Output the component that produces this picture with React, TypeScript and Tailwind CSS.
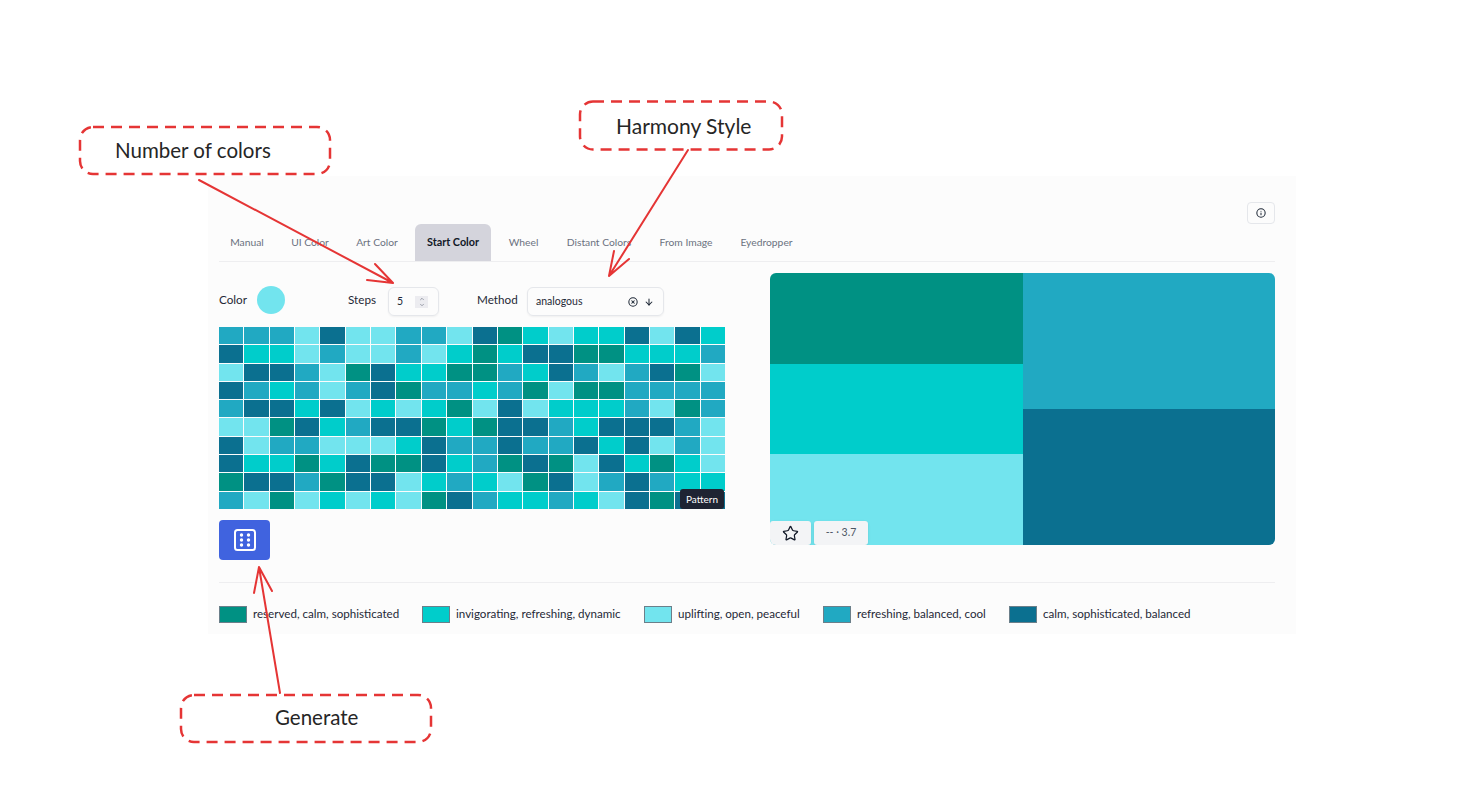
import { Star, ArrowDown, CircleX, Info, ChevronUp, ChevronDown } from "lucide-react";

const colors: Record<string, string> = { g: "bg-[#009183]", c: "bg-[#00cdcb]", l: "bg-[#72e4ee]", b: "bg-[#21a9c2]", d: "bg-[#0b7090]" };
const rows = [
  "bbbldllbbldgclccdldc",
  "dcclbllblcgcddggcccb",
  "lddblgdccggbcdblbdgl",
  "dbcblbdgbbcbglggbbbb",
  "bddcdlclcgldlcccblgb",
  "llgdcbddgcgddbcdddbl",
  "dlbblllcdbbdbbdcdlbl",
  "dccgcdggdcbgdgldcgcl",
  "gddbgddlcbclgdlbdbcc",
  "blglclclgdbccbcldgdd",
];
const tabs = [
  ["Manual", "w-[56px]"],
  ["UI Color", "w-[58px]"],
  ["Art Color", "w-[64px]"],
  ["Start Color", "w-[76px]"],
  ["Wheel", "w-[53px]"],
  ["Distant Colors", "w-[86px]"],
  ["From Image", "w-[76px]"],
  ["Eyedropper", "w-[73px]"],
];
const legend = [
  ["g", "reserved, calm, sophisticated", "w-[147px]", ""],
  ["c", "invigorating, refreshing, dynamic", "w-[165px]", "ml-[22px]"],
  ["l", "uplifting, open, peaceful", "w-[122px]", "ml-[23px]"],
  ["b", "refreshing, balanced, cool", "w-[130px]", "ml-[23px]"],
  ["d", "calm, sophisticated, balanced", "w-[149px]", "ml-[22px]"],
];

function Callout({ className, label }: { className: string; label: string }) {
  return (
    <div className={`absolute whitespace-nowrap text-[#262626] ${className}`}>
      {label}
    </div>
  );
}

export default function App() {
  return (
    <div className="relative h-[793px] w-[1476px] overflow-hidden bg-white font-['Lato','Noto_Sans',sans-serif] text-[#1f2937]">
      <div className="ml-[208px] pt-[176px]">
        <div className="h-[458px] w-[1088px] bg-[#fcfcfc] pl-[11px] pr-[21px] pt-[26px]">
          <div className="flex h-[22px] justify-end">
            <button className="flex w-[28px] items-center justify-center rounded-[4px] border border-[#e5e7eb]">
              <Info size={10} strokeWidth={2.5} className="text-[#1f2937]" />
            </button>
          </div>
          <div className="flex h-[38px] gap-[6px] border-b border-[#eeeef0]">
            {tabs.map(([t, w]) => (
              <div
                key={t}
                className={
                  t === "Start Color"
                    ? `flex items-center justify-center rounded-t-[6px] bg-[#d4d4dc] text-[10.8px] font-bold text-[#111827] ${w}`
                    : `flex items-center justify-center whitespace-nowrap text-[10.3px] text-[#6b7280] ${w}`
                }
              >
                {t}
              </div>
            ))}
          </div>
          <div className="mt-[11px] flex h-[309px] justify-between">
            <div className="w-[506px]">
              <div className="mt-[12px] flex h-[30px] items-center text-[11.7px]">
                <span className="w-[38px]">Color</span>
                <span className="h-[28px] w-[28px] rounded-full bg-[#72e4ee]" />
                <span className="ml-[63px] w-[40px]">Steps</span>
                <div className="mt-[3px] flex h-[29px] w-[51px] items-center justify-between rounded-[6px] border border-[#e5e7eb] pl-[8px] pr-[10px] text-[10.5px] shadow-xs">
                  5
                  <span className="flex h-[12px] w-[13px] flex-col items-center justify-center bg-[#ececf0] text-[#6b7280]">
                    <ChevronUp size={6} strokeWidth={2.5} />
                    <ChevronDown size={6} strokeWidth={2.5} />
                  </span>
                </div>
                <span className="ml-[38px] w-[50px]">Method</span>
                <div className="mt-[3px] flex h-[29px] w-[137px] items-center rounded-[6px] border border-[#e5e7eb] pl-[8px] pr-[9px] text-[10.5px] shadow-xs">
                  <span className="flex-1">analogous</span>
                  <CircleX size={10} strokeWidth={2.5} className="mr-[6px]" />
                  <ArrowDown size={10} strokeWidth={2.5} />
                </div>
              </div>
              <div className="relative mt-[12px] grid h-[182px] w-[506px] grid-cols-20 grid-rows-10 gap-px">
                {rows.flatMap((r, i) =>
                  r.split("").map((c, j) => <div key={`${i}-${j}`} className={colors[c]} />)
                )}
                <div className="absolute bottom-0 right-[1px] flex h-[20px] w-[44px] items-center justify-center rounded-[3px] bg-[#1f2433] text-[10px] text-white">
                  Pattern
                </div>
              </div>
              <button className="mt-[11px] flex h-[40px] w-[51px] items-center justify-center rounded-[4px] bg-[#4063df]">
                <svg width="24" height="24" viewBox="0 0 24 24" fill="none" stroke="white">
                  <rect x="2" y="2" width="20" height="20" rx="2.5" strokeWidth="2" />
                  <g fill="white" stroke="none">
                    <circle cx="8.5" cy="7" r="1.7" />
                    <circle cx="15.5" cy="7" r="1.7" />
                    <circle cx="8.5" cy="12" r="1.7" />
                    <circle cx="15.5" cy="12" r="1.7" />
                    <circle cx="8.5" cy="17" r="1.7" />
                    <circle cx="15.5" cy="17" r="1.7" />
                  </g>
                </svg>
              </button>
            </div>
            <div className="relative flex h-[272px] w-[505px] overflow-hidden rounded-[6px]">
              <div className="flex w-[253px] flex-col">
                <div className="flex-1 bg-[#009183]" />
                <div className="flex-1 bg-[#00cdcb]" />
                <div className="flex-1 bg-[#72e4ee]" />
              </div>
              <div className="flex flex-1 flex-col">
                <div className="flex-1 bg-[#21a9c2]" />
                <div className="flex-1 bg-[#0b7090]" />
              </div>
              <div className="absolute bottom-0 left-0 flex gap-[3px]">
                <div className="flex h-[24px] w-[41px] items-center justify-center rounded-[3px] bg-[#f3f4f6] shadow-sm">
                  <Star size={17} strokeWidth={1.75} className="text-[#111827]" />
                </div>
                <div className="flex h-[24px] w-[54px] items-center justify-center rounded-[3px] bg-[#f3f4f6] text-[10.5px] text-[#4b5563] shadow-sm">
                  -- · 3.7
                </div>
              </div>
            </div>
          </div>
          <div className="border-t border-[#eeeef0] pt-[23px]">
            <div className="flex text-[11.6px] text-[#1f2937]">
              {legend.map(([c, t, w, m]) => (
                <div key={t} className={`flex items-center gap-[6px] ${m}`}>
                  <span className={`h-[17px] w-[28px] border border-[#6b7f8a] ${colors[c]}`} />
                  <span className={`whitespace-nowrap pb-[2px] leading-[15px] ${w}`}>{t}</span>
                </div>
              ))}
            </div>
          </div>
        </div>
      </div>

      <Callout className="left-[115px] top-[135px] text-[20.5px]" label="Number of colors" />
      <Callout className="left-[616px] top-[110px] text-[21px]" label="Harmony Style" />
      <Callout className="left-[275px] top-[702px] text-[20.5px]" label="Generate" />

      <svg className="pointer-events-none absolute left-0 top-0" width="1476" height="793" fill="none" stroke="#e53535" strokeWidth="2" strokeLinecap="round" strokeLinejoin="round">
        <g strokeWidth="2.5" strokeDasharray="11 7" strokeLinecap="butt">
          <rect x="80" y="127" width="250" height="47" rx="13" />
          <rect x="580" y="101.5" width="202" height="48" rx="13" />
          <rect x="181" y="695" width="250" height="47" rx="13" />
        </g>
        <path d="M199 180 L393 283 M375 264 L393 283 L367 280" />
        <path d="M688 150 L609 276 M614 251 L609 276 L629 259" />
        <path d="M280 693 L259 567 M254 593 L259 567 L272 591" />
      </svg>
    </div>
  );
}
